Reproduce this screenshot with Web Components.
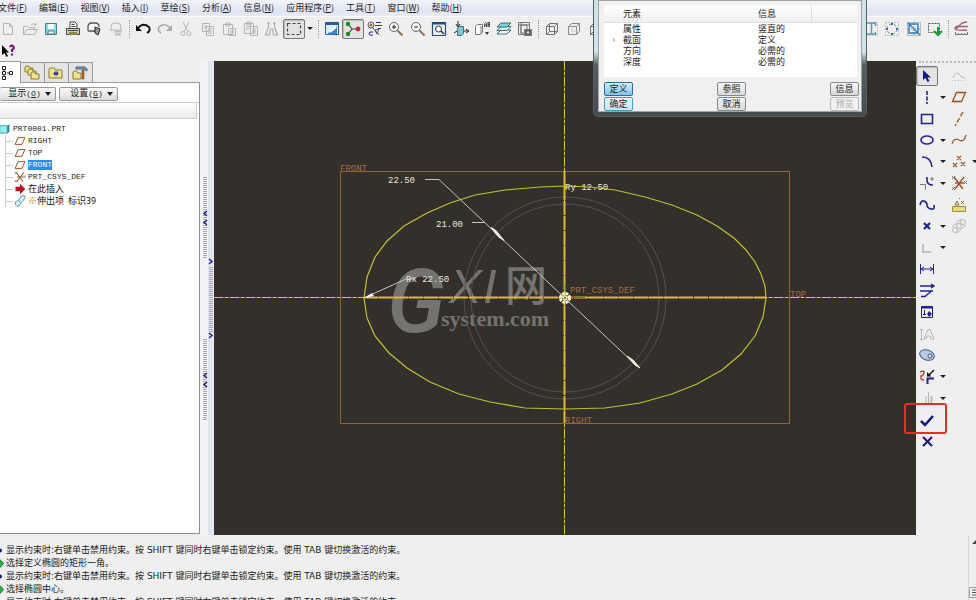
<!DOCTYPE html>
<html lang="zh-CN">
<head>
<meta charset="utf-8">
<title>PRT0001</title>
<style>
  html, body { margin: 0; height: 100%; overflow: hidden; background: #efefef; }
  body { font: 9px/12px "Liberation Sans", "Noto Sans CJK SC", sans-serif; color: #222; }
</style>
</head>
<body>
<cad-app></cad-app>
<script>
const define = (name, html, setup) => customElements.define(name, class extends HTMLElement {
  connectedCallback() {
    if (this.shadowRoot) return;
    const root = this.attachShadow({ mode: 'open' });
    const t = document.createElement('template');
    t.innerHTML = typeof html === 'function' ? html(this) : html;
    root.append(t.content.cloneNode(true));
    if (setup) setup(this, root);
  }
});
const CJK = '"Noto Sans CJK SC", sans-serif';
const folder = (x, y, w, h) => `<path d="M${x} ${y + h}V${y + 1}l1-1h${w / 3}l1 2h${w * 2 / 3 - 2}v${h - 2}z" fill="#efe48c" stroke="#8a7a30"/>`;
const N = 'fill="none" stroke="#23238e" stroke-width="1.6"';
const N2 = 'fill="none" stroke="#23238e"';
const G = 'fill="none" stroke="#b4b4b4"';
const ICONS = {
  new: `<path d="M3.5 2.5h6l3 3v8h-9zM9.500 2.500v3h3" ${G}/>`,
  open: `<path d="M1.500 13.500v-8h4l1 1h6v2M1.500 13.500l3-5h11l-3 5zM9 4q3-3 5 0m0-2v2h-2" ${G}/>`,
  save: `<path d="M2.500 2.500h11v11h-11z" fill="#86dbe2" stroke="#3f7f91"/><path d="M5 3h6v5H5z" fill="#f4ffff"/><path d="M5 10h6v3H5z" fill="#fff" stroke="#3f7f91"/>`,
  print: `<path d="M5 7V1h5l2 2v4" fill="#fff" stroke="#444"/><path d="M1.500 7.500h13v6h-13z" fill="#cfccb6" stroke="#444"/><path d="M4 11h8v3H4z" fill="#8c8a4a"/><path d="M6.500 3.500h3m-3 2h4M3 9.500h10" stroke="#444"/>`,
  plot: `<path d="M2 10V6q0-4 4-4h3q4 0 4 4M2 10h8" fill="#fff" stroke="#555" stroke-width="1.300"/><path d="M9 6l5 2-2 6-3-2z" fill="#999" stroke="#222"/>`,
  send: `<path d="M3 10V6q0-4 4-4h2q4 0 4 4v3H3" ${G}/><path d="M6 10.500h8M7 13.500h6" stroke="#bbb" stroke-width="2"/>`,
  undo: `<path d="M3 7q5-6 11-1 2 4-2 6" fill="none" stroke="#111" stroke-width="1.900"/><path d="M1 4v6h6z" fill="#111"/>`,
  redo: `<path d="M13 7q-5-6-11-1-2 4 2 6" fill="none" stroke="#aaa" stroke-width="1.600"/><path d="M15 4v6H9z" fill="#aaa"/>`,
  cut: `<path d="M5 1l5 10M11 1L6 11" ${G}/><circle cx="5" cy="12.500" r="2" ${G}/><circle cx="11" cy="12.500" r="2" ${G}/>`,
  copy: `<path d="M2.500 2.500h7v8h-7zM6.500 5.500h7v9h-7zM4 5h3M4 7h2m2 1h4m-4 2h4m-4 2h4" ${G}/>`,
  paste: `<path d="M2.500 3.500h9v10h-9zM5 2h4v3H5zM7.500 7.500h7v7h-7zM9 10h4m-4 2h4" ${G}/>`,
  paste2: `<path d="M1.500 2.500h9v10h-9zM4 1h4v3H4zM3 6h5M3 8h3M7.500 5.500h7v9h-7zM9 8h4m-4 2h4m-4 2h4" ${G}/>`,
  find: `<path d="M4.500 2v4l-3 8h4l1-6m4-6v4l3 8h-4l-1-6M6 8h3M3 2h3M9 2h3" fill="none" stroke="#aaa" stroke-width="1.200"/>`,
  select: `<path d="M1.500 2.500h13v11h-13z" fill="none" stroke="#444" stroke-dasharray="3 2" stroke-width="1.200"/>`,
  repaint: `<path d="M1.500 1.500h13v12h-13z" fill="#d9ecf8" stroke="#275b94"/><path d="M1.500 3h13" stroke="#275b94" stroke-width="2"/><path d="M2 14L13 5v8z" fill="#3b87c4"/><path d="M6 11l6-5" stroke="#fff" stroke-width="2"/>`,
  spin: `<path d="M3 3l4 5-4 5M7 8h7" fill="none" stroke="#444" stroke-width="1.200"/><circle cx="3" cy="3" r="2.200" fill="#168c2b"/><circle cx="3" cy="13" r="2.200" fill="#168c2b"/><circle cx="13" cy="8" r="2.400" fill="#cc2430"/>`,
  orient: `<path d="M9 1.500h5M8 4.500h7M11 7.500h3" stroke="#30308e"/><circle cx="4" cy="4" r="3" fill="none" stroke="#555"/><path d="M5 6l7 8M8 9l4-1-2 5z" fill="none" stroke="#555"/><circle cx="4" cy="4" r="1.500" fill="#c05a40"/><path d="M6 11q-4-1-4 2 1 2 4 1" ${N2}/>`,
  zoomin: `<circle cx="6" cy="6" r="4.500" fill="#f7f7f7" stroke="#666"/><path d="M4 6h4M6 4v4" stroke="#222"/><path d="M9.500 9.500l5 5" stroke="#8a7254" stroke-width="2"/>`,
  zoomout: `<circle cx="6" cy="6" r="4.500" fill="#f7f7f7" stroke="#666"/><path d="M4 6h4" stroke="#222"/><path d="M9.500 9.500l5 5" stroke="#8a7254" stroke-width="2"/>`,
  refit: `<path d="M1.500 1.500h13v13h-13z" fill="#e7f2fa" stroke="#2d4c7e" stroke-width="1.200"/><path d="M2 2.500h12" stroke="#2d4c7e" stroke-width="2"/><circle cx="7.500" cy="8" r="3" fill="#fff" stroke="#333"/><path d="M10 10l3 3" stroke="#333" stroke-width="1.600"/>`,
  reorient: `<path d="M4.500 7.500l2-2h4v7l-2 2h-4z" fill="#7fc8d2" stroke="#39707a"/><path d="M5 0v5M3 3l2 3 2-3M11 10h4m-2-2l3 2-3 2M1 12l3-2" fill="none" stroke="#222"/>`,
  views: `<path d="M1.500 5.500l2-2h5v8l-2 2h-5zM7 5v8" fill="#fff" stroke="#777"/><path d="M10.500 6V2.500q1-2 2 0V6m-2-2h2m1.500-3v5m0-4.500h1.500v4H14M14 3.500h2" fill="none" stroke="#444"/><path d="M11 11h4l-2 3z" fill="#333"/>`,
  layers: `<path d="M1 13l4-4h10l-4 4z" fill="#fff" stroke="#39707a"/><path d="M1 9.500l4-4h10l-4 4z" fill="#d3f1f1" stroke="#39707a"/><path d="M1 6l4-4h10l-4 4z" fill="#84d1d4" stroke="#39707a"/>`,
  viewmgr: `<path d="M1.500 1.500h11v12h-11zM4 4h6v8H4zM4 1v13M1 4h12" fill="none" stroke="#777"/><path d="M7 8h8v7H7z" fill="#777"/><circle cx="11" cy="11.500" r="2" fill="#ddd" stroke="#333"/>`,
  cube: `<path d="M2.500 5.500h8v8h-8zM5.500 2.500h8v8h-8zM2.500 5.500l3-3M10.500 5.500l3-3M10.500 13.500l3-3M2.500 13.500l3-3" fill="none" stroke="#777"/>`,
  cube2: `<path d="M2.500 5.500h8v8h-8zM5.500 2.500h8v8M2.500 5.500l3-3M10.500 5.500l3-3M10.500 13.500l3-3" fill="none" stroke="#888"/><path d="M5.500 3v7h7" fill="none" stroke="#ccc"/>`,
  dims: `<path d="M4 2h9M4 13h9M8.500 2v11M12.500 2v3m0 6v3" fill="none" stroke="#5799aa" stroke-width="1.500"/><path d="M1.500 1.500h13v13h-13z" fill="none" stroke="#999" stroke-dasharray="1 2"/>`,
  constr: `<path d="M1.500 1.500h13v13h-13z" fill="none" stroke="#888" stroke-dasharray="1 2"/><circle cx="8" cy="8" r="5" fill="none" stroke="#777" stroke-dasharray="3 2"/><path d="M2 8h2M12 8h2M8 2v2M8 12v2" stroke="#2f6aa0" stroke-width="2"/>`,
  grid: `<path d="M1.500 1.500h13v13h-13zM8 1v14M1 8h14" fill="none" stroke="#888" stroke-dasharray="1 1"/><path d="M3 3h9v9H3zM2 2l12 12" fill="none" stroke="#277fc0" stroke-width="1.400"/>`,
  verts: `<path d="M1.500 2.500h11v9h-11z" fill="none" stroke="#555" stroke-dasharray="2 1"/><path d="M7 10l4 4 4-4M11 6v7" fill="none" stroke="#22993a" stroke-width="2"/>`,
  sketcher: `<path d="M14 1Q9 1 6 5q-5 1-4 3 1 2 12 1M6 5.500h9M6 5l-3 3" fill="none" stroke="#a55b80" stroke-width="1.300"/><path d="M2 13.500h12M2.500 11v3m3-2v2m3-2v2m3-2v2m3-3v3" stroke="#777"/>`,
  help: `<path d="M2 2v10l2.500-2 2 4 1.500-1-2-3.500h3z" fill="#000"/><path d="M10 4q1-2 3-1 2 2-1 4v2m0 1.500v2" fill="none" stroke="#7a1280" stroke-width="2.200"/>`,
  treeview: `<path d="M3.500 1.500h3v3h-3zM3.500 6.500h3v3h-3zM3.500 11.500h3v3h-3zM10.500 6.500h3v3h-3zM8 8h2M5 5v1M5 10v1" fill="none" stroke="#222"/>`,
  folders: folder(1, 1, 8, 6) + folder(4, 4, 8, 6) + folder(7, 7, 8, 7),
  favs: folder(1, 3, 13, 10) + `<path d="M8 6v5M5.500 8.500h5M6 7l4 3m0-3l-4 3" stroke="#26269a"/>`,
  toolsf: folder(1, 6, 8, 8) + `<path d="M4 2h9l2 2v2l-3-2H4z" fill="#8fa5bc" stroke="#4a6078"/><path d="M10 5h2v9h-2z" fill="#c56d30" stroke="#71401f" stroke-width=".6"/>`,
  part: `<path d="M1 3.500h10v10H1z" fill="#8feef0" stroke="#398f96"/><path d="M11 3.500l3-2v10l-3 2z" fill="#2f8b92"/>`,
  plane: `<path d="M5.500 3.500h9l-4 9h-9z" fill="none" stroke="#96501f" stroke-width="1.300"/>`,
  csys: `<path d="M3 2l9 12M13 2L4 14M8 8H4M8 8h5" fill="none" stroke="#a0522d" stroke-width="1.400"/><path d="M1 1l3 3m0-3L1 4M13 6l3 3m0-3l-3 3M1 12l3 3m0-3l-3 3" stroke="#777"/>`,
  insert: `<path d="M2 5h6V1l7 7-7 7v-4H2z" fill="#b90f22"/>`,
  extrude: `<path d="M2 9l4-2 3 3-1 4-4 1-2-2zM6 7l4-6h4l1 3-6 7" fill="#d1f0f2" stroke="#42848c"/>`,
  arrow: `<path d="M4 2v10l2.500-2 2 4 2-1-2-3.500h3.500z" fill="#111a8c"/>`,
  line: `<path d="M8 2v13" ${N} stroke-dasharray="4 1.500"/>`,
  rect: `<path d="M2.500 3.500h11v9h-11z" ${N}/>`,
  ellipse: `<ellipse cx="8" cy="8" rx="6" ry="4" ${N}/>`,
  arc: `<path d="M3 3q9 0 10 10" ${N}/>`,
  fillet: `<path d="M8 2v3q0 5 6 5" ${N}/><path d="M1 9.500h5.500v5M13 2v4m-2-2h4" fill="none" stroke="#777"/>`,
  spline: `<path d="M1 8q1-5 4-4t3 4 4 4 3-4" ${N}/>`,
  point: `<path d="M5 5l6 6m0-6l-6 6" fill="none" stroke="#23238e" stroke-width="2.200"/>`,
  corner: `<path d="M4 4v8h8" fill="none" stroke="#b4b4b4" stroke-width="1.500"/>`,
  dim: `<path d="M1.500 3v10M14.500 3v10M2 8h12M5 6L2 8l3 2m6-4l3 2-3 2" ${N2}/>`,
  modify: `<path d="M1 3h13M12 1l3 2-3 2M1 8h13M2 13.500h4l7-6" fill="none" stroke="#23238e" stroke-width="1.400"/>`,
  constraint: `<path d="M2.500 2.500h11v11h-11z" ${N2}/><path d="M2 3.500h12" stroke="#23238e" stroke-width="2"/><path d="M5.500 6v4M4 10.500h3" ${N2}/><path d="M10 7l3 3-3 3-2-3z" fill="#23238e"/>`,
  text: `<path d="M2.500 3v10M1 3.500h3M1 13.500h3M5 13l4-9.500h2l4 9.500h-3l-1-3H8l-1 3z" ${G}/>`,
  palette: `<ellipse cx="8" cy="8" rx="7.500" ry="5" transform="rotate(20 8 8)" fill="#b9cbe4" stroke="#3a5588"/><circle cx="11" cy="9" r="2" fill="#dfe9f5" stroke="#3a5588"/>`,
  trim: `<path d="M1 3q5-2 4 1t-3 3q-1 4 3 4" fill="none" stroke="#b0482e" stroke-width="1.300"/><path d="M8.500 15V9.500H15" fill="none" stroke="#23238e" stroke-width="2"/><path d="M15 1l-5 5" stroke="#111" stroke-width="1.500"/><path d="M8 3v4.500h4.500z" fill="#111"/>`,
  mirror: `<path d="M9.500 2v12M7 6v7H5M12 6q3 3 0 7z" ${G}/>`,
  done: `<path d="M2 9l4 4L14 4" fill="none" stroke="#15157e" stroke-width="2.500"/>`,
  quit: `<path d="M4 4l9 9m0-9l-9 9" fill="none" stroke="#15157e" stroke-width="2"/>`,
  sketchg: `<path d="M2 10q3-7 6-4 2 4 6 4" ${G}/><path d="M1 12.500h14" fill="none" stroke="#bbb" stroke-dasharray="1 2"/>`,
  axis: `<path d="M12 1L4 15" fill="none" stroke="#a06038" stroke-width="1.500" stroke-dasharray="5 2"/>`,
  curve: `<path d="M1 12q2-7 7-4t7-5" fill="none" stroke="#a06038" stroke-width="1.400"/>`,
  points: `<path d="M6 2l4 4m0-4L6 6M2 9l4 4m0-4l-4 4M10 8l4 4m0-4l-4 4" stroke="#a06038" stroke-width="1.400"/>`,
  ref: `<path d="M1.500 9.500h13v5h-13z" fill="#e8db75" stroke="#9c8c3c"/><path d="M4 8l2-4 2 4zM8 2l1-1M10 4l3 3m0-3l-3 3" fill="none" stroke="#8c6a38"/>`,
  chain: `<circle cx="4" cy="12" r="2.500" ${G}/><circle cx="8" cy="8" r="2.500" ${G}/><circle cx="12" cy="4" r="2.500" ${G}/><path d="M1 9l9-8M6 15l9-8" ${G}/>`
};
define('cad-icon', el => `<style>:host{display:block;width:16px;height:16px;flex:none}svg{display:block}</style><svg width="16" height="16" viewBox="0 0 16 16" aria-hidden="true">${ICONS[el.getAttribute('name')]}</svg>`);

define('drop-arrow', `<style>:host{display:block;width:6px;flex:none}button{all:unset;display:block;width:0;border:3px solid transparent;border-top-color:#222;border-bottom:0}</style><button aria-label="更多"></button>`);

define('tool-button', el => `<style>
  :host{display:block;flex:none;width:16px}
  button{appearance:none;border:1px solid transparent;background:none;padding:1px 2px;margin:0 -3px;border-radius:2px;display:block}
  :host([pressed]) button{border-color:#777;background:#e3e3e3;box-shadow:inset 1px 1px 1px #bbb}
  </style><button aria-label="${el.getAttribute('icon')}"><cad-icon name="${el.getAttribute('icon')}"></cad-icon></button>`);

define('menu-bar', () => {
  const items = [['文件', 'F'], ['编辑', 'E'], ['视图', 'V'], ['插入', 'I'], ['草绘', 'S'], ['分析', 'A'], ['信息', 'N'], ['应用程序', 'P'], ['工具', 'T'], ['窗口', 'W'], ['帮助', 'H']];
  return `<style>
  :host{display:block;background:linear-gradient(#f3f5fb,#dfe4f4 70%,#e8ebf5);border-bottom:1px solid #fafafa}
  nav{display:flex;gap:12px;height:16px;align-items:center;margin-left:-2px}
  button{all:unset;font:9px/14px "Noto Sans CJK SC",sans-serif;color:#1c1c1c}
  </style><nav>${items.map(([t, k]) => `<button>${t}(<u>${k}</u>)</button>`).join('')}</nav>`;
});

define('tool-bar', () => {
  const group = (w, names) => `<div class="g" style="width:${w}px">${names.split(' ').map(n => `<tool-button icon="${n.replace('*', '')}"${n.includes('*') ? ' pressed' : ''}></tool-button>`).join('')}</div>`;
  return `<style>
  :host{display:block}
  .bar{display:flex;height:23px;align-items:center}
  .g{display:flex;justify-content:space-between;flex:none}
  i{flex:none;width:0;height:18px;border-left:1px dotted #999}
  .sp{flex:1}
  .second{height:21px;display:flex;align-items:center}
  </style>
  <div class="bar">${group(124, 'new open save print plot send')}<i style="margin:0 5px"></i>${group(167, 'undo redo cut copy paste paste2 find select*')}<drop-arrow style="margin:0 5px"></drop-arrow><i style="margin-right:5px"></i>${group(209, 'repaint spin* orient zoomin zoomout refit reorient views layers viewmgr')}<i style="margin:0 5px"></i>${group(60, 'cube cube2 cube')}<span class="sp"></span>${group(80, 'dims constr grid verts')}<i style="margin:0 4px 0 5px"></i>${group(16, 'sketcher')}<span style="width:7px"></span></div>
  <div class="second"><tool-button icon="help"></tool-button></div>`;
});

define('tree-item', el => `<style>
  :host{display:flex;align-items:center;height:12px;gap:2px;padding-left:14px;font:8px/10px "Liberation Mono",${CJK};color:#222;background:linear-gradient(#ccc,#ccc) 5px 0/1px 100% no-repeat,linear-gradient(#ccc,#ccc) 5px 6px/8px 1px no-repeat}
  :host([root]){padding-left:0;margin-left:-1px;background:none}
  :host([cjk]){font:9px/12px ${CJK};color:#111}
  :host([selected]) span{background:#2f8ae8;color:#fff}
  cad-icon{transform:scale(.75);width:12px;height:12px;transform-origin:0 0}
  span{white-space:pre}
  </style><cad-icon name="${el.getAttribute('icon')}"></cad-icon><span><slot></slot></span>`);

define('side-panel', `<style>
  :host{display:flex;flex-direction:column;width:200px;flex:none;padding-bottom:1px}
  .tabs{display:flex;height:22px;align-items:flex-end;padding-top:1px;box-sizing:border-box}
  .tabs button{appearance:none;box-sizing:border-box;width:24px;height:21px;padding:2px 3px;border:1px solid #999;border-left:0;border-bottom:0;background:#e4e4e4}
  .tabs button:first-child{width:21px;background:#fff;padding-left:0;height:22px;position:relative}
  .tabs button:first-child cad-icon{margin-left:-1px}
  .body{flex:1;background:#fff;border:1px solid #8e8e96;border-left:0;border-top:0;box-shadow:0 -1px #999;display:flex;flex-direction:column}
  .cmds{display:flex;gap:3px;padding:4px 0 1px;border-bottom:1px solid #ccc}
  .cmds button{appearance:none;display:flex;align-items:center;justify-content:center;gap:4px;width:59px;height:14px;padding:0;border:1px solid #999;border-radius:2px;background:linear-gradient(#f8f8f8,#dcdcdc);font:9px/12px "Liberation Mono",${CJK};color:#222}
  .cmds button:first-child{width:56px;border-left:0;padding-left:4px}
  .cmds button:last-child{padding-left:6px}
  .cmds small{font-size:8px}
  .cmds b{border:3px solid transparent;border-top:4px solid #222;border-bottom:0}
  .strip{height:15px;margin:0 2px 0 0;border:1px solid #ccc;border-left:0;border-top:0;background:linear-gradient(#fff,#eaeaea)}
  .tree{padding-top:4px}
  em{font-style:normal;color:#9a8b00}
  </style>
  <div class="tabs" role="tablist"><button role="tab" aria-label="模型树"><cad-icon name="treeview"></cad-icon></button><button role="tab" aria-label="文件夹"><cad-icon name="folders"></cad-icon></button><button role="tab" aria-label="收藏夹"><cad-icon name="favs"></cad-icon></button><button role="tab" aria-label="工具"><cad-icon name="toolsf"></cad-icon></button></div>
  <div class="body">
    <div class="cmds"><button><span>显示<small>(<u>O</u>)</small></span><b></b></button><button><span>设置<small>(<u>G</u>)</small></span><b></b></button></div>
    <div class="strip"></div>
    <div class="tree">
      <tree-item root icon="part">PRT0001.PRT</tree-item>
      <tree-item icon="plane">RIGHT</tree-item>
      <tree-item icon="plane">TOP</tree-item>
      <tree-item icon="plane" selected>FRONT</tree-item>
      <tree-item icon="csys">PRT_CSYS_DEF</tree-item>
      <tree-item cjk icon="insert">在此插入</tree-item>
      <tree-item cjk icon="extrude"><em>※</em>伸出项  标识39</tree-item>
    </div>
  </div>`);

define('pane-splitter', `<style>:host{display:block;width:14px;flex:none;background:linear-gradient(90deg,#f3f3f7 55%,#dfe3ef 60%,#e6e9f4)}svg{display:block}</style>
  <svg width="14" height="474" viewBox="200 61 14 474" fill="none">
    <g stroke="#a9a9b2" stroke-width="4" stroke-dasharray="1 1"><path d="M205 177v81M205 339v81M211 267v66"/></g>
    <path d="M207 211l-3 2.500 3 2.500m0 4l-3 2.500 3 2.500M209 259l3 2.500-3 2.500m0 69l3 2.500-3 2.500M207 373l-3 2.500 3 2.500m0 4l-3 2.500 3 2.500" stroke="#24248f" stroke-width="1.500"/>
  </svg>`);

define('sketch-canvas', `<style>
  :host{display:block;flex:1;min-width:0;background:#33302c;overflow:hidden}
  svg{display:block;width:100%;height:100%}
  .t{font:9px "Liberation Mono",monospace}
  </style>
  <svg viewBox="214 61 702 474" preserveAspectRatio="xMidYMid slice" fill="none">
    <g fill="#747370">
      <text x="387" y="332" font-family="Roboto" font-style="italic" font-weight="500" font-size="88">G</text>
      <text x="449" y="303" font-family="Liberation Sans" font-style="italic" font-size="49">X</text>
      <text x="483" y="303" font-family="Liberation Sans" font-style="italic" font-size="49">I</text>
      <text x="505" y="301" font-family="Noto Sans CJK SC" font-weight="500" font-size="42">网</text>
      <text x="441" y="326" font-family="Liberation Serif" font-weight="700" font-size="22">system.com</text>
    </g>
    <g stroke="#55524e"><circle cx="565" cy="298" r="101"/><circle cx="565" cy="298" r="94"/></g>
    <path d="M340.500 171.500h449v252h-449z" stroke="#8f6630"/>
    <path d="M766 298 765 286 761 274 755 262 746 250 734 238 717 226 697 215 672 205 645 197 615 190 590 187 565 186 540 187 505 190 475 195 450 203 427 213 404 226 387 241 375 257 367 277 364 298 367 318 375 336 389 353 407 368 430 382 459 394 490 402 525 408 565 409 605 408 640 403 672 394 697 384 722 370 741 354 755 336 763 317z" stroke="#c0c034" stroke-width="1.200"/>
    <path d="M214 297.500h702" stroke="#7d621c"/>
    <path d="M564.500 61v474" stroke="#7d621c"/>
    <path d="M214 297.500h702" stroke="#e3c62c" stroke-dasharray="9 2 3 2"/>
    <path d="M564.500 61v474" stroke="#e3c62c" stroke-dasharray="9 2 3 2"/>
    <path d="M364 297.500h402M564.500 171v252" stroke="#deba34" stroke-width="2" stroke-dasharray="14 1"/>
    <g stroke="#c5c4bd"><path d="M425 179.500h14L638 367M472 222.500h13M366 297l40-18h9"/></g>
    <path d="M491 227.500l5 3 8 10-6-4zM640 368l-5-3-8-9 6 4z" fill="#f1f1e2" stroke="#f1f1e2"/><path d="M364 298l8-5 2 3z" fill="#fff"/>
    <circle cx="565" cy="298" r="4.500" stroke="#fffbd0" stroke-width="3" stroke-dasharray="2.600 .94"/><path d="M565 283v8" stroke="#349b3b"/><path d="M571 297.500h14" stroke="#c84a30"/><circle cx="565" cy="298" r="2" fill="#6c9951" stroke="#fff"/>
    <g class="t" fill="#a56b45"><text x="340" y="171">FRONT</text><text x="565" y="423">RIGHT</text><text x="790" y="297">TOP</text><text x="570" y="293">PRT_CSYS_DEF</text></g>
    <g class="t" fill="#e6e5dc"><text x="388" y="183">22.50</text><text x="436" y="227">21.00</text><text x="406" y="282">Rx 22.50</text><text x="565" y="190">Ry 12.50</text></g>
  </svg>`);

define('sketch-palette', () => {
  const rows = [['arrow*', 0, 'sketchg'], ['line', 1, 'plane'], ['rect', 0, 'axis'], ['ellipse', 1, 'curve'], ['arc', 1, 'points', 1], ['fillet', 1, 'csys'], ['spline', 0, 'ref'], ['point', 1, 'chain'], ['corner', 1], ['dim'], ['modify'], ['constraint'], ['text'], ['palette'], ['trim', 1], ['mirror', 1], ['done!'], ['quit']];
  return `<style>
  :host{display:block;width:60px;flex:none;position:relative;overflow:visible}
  .top{border-top:2px dotted #bbb;margin:0 0 2px 3px}
  .list{display:grid;grid-template-rows:repeat(18,minmax(0,1fr));height:387px}
  .r{display:grid;grid-template-columns:16px 6px 16px 6px;column-gap:5px;padding-left:3px;align-items:center;overflow:visible}
  .hot{position:relative}
  .hot::after{content:"";position:absolute;left:-15px;top:-7px;width:39px;height:27px;border:2px solid #e0302a;border-radius:3px;pointer-events:none}
  </style><div class="top"></div><div class="list">${rows.map(([a, d, b, e]) => `<div class="r"><span class="${a.includes('!') ? 'hot' : ''}"><tool-button icon="${a.replace(/[*!]/, '')}"${a.includes('*') ? ' pressed' : ''}></tool-button></span>${d ? '<drop-arrow></drop-arrow>' : '<span></span>'}${b ? `<tool-button icon="${b}"></tool-button>` : ''}${e ? '<drop-arrow></drop-arrow>' : ''}</div>`).join('')}</div>`;
});

define('message-log', () => {
  const a = '显示约束时:右键单击禁用约束。按 SHIFT 键同时右键单击锁定约束。使用 TAB 键切换激活的约束。';
  return `<style>
  :host{display:flex;height:65px;flex:none;overflow:hidden;justify-content:space-between;font:9px/13px "DejaVu Sans",${CJK};color:#222}
  ul{list-style:none;margin:0;padding:9px 0 0}
  li{height:13px;display:flex;align-items:center;gap:2px;white-space:nowrap}
  svg{display:block;flex:none}
  .sc{width:7px;border-left:1px solid #d5d5d5;margin-top:1px}
  </style><ul>${[a, '选择定义椭圆的矩形一角。', a, '选择椭圆中心。', a].map((t, i) => `<li><svg width="4" height="9" viewBox="0 0 4 9">${i % 2 ? '<path d="M-3 1l3-.5 3.500 4L0 8.500z" fill="#2fae4d" stroke="#13722c"/>' : '<circle cx="0" cy="4.500" r="2" fill="#1a1a8c"/>'}</svg><span>${t}</span></li>`).join('')}</ul>
  <div class="sc"><svg width="7" height="64" viewBox="0 0 7 64"><path d="M3 8l4-4v4z" fill="#444"/><path d="M.5 51.500H8v10H.5z" fill="#f7f7f7" stroke="#999"/><path d="M3 54h4M3 56.500h4M3 59h4" stroke="#555"/></svg></div>`;
});

define('dialog-button', `<style>
  :host{display:block}
  button{appearance:none;display:block;box-sizing:border-box;width:29px;height:14px;padding:0;border:1px solid #888;border-radius:2px;background:linear-gradient(#f7f7f7,#d9d9d9);font:9px/12px ${CJK};color:#222}
  :host([primary]) button{border-color:#2c6f9c;background:linear-gradient(#d5effb,#7cc2e8)}
  :host([def]) button{border-color:#3aa0c8;background:linear-gradient(#eef8fc,#c9e2ee)}
  :host([off]) button{color:#aaa;border-color:#bbb;background:#f2f2f2}
  </style><button><slot></slot></button>`);

define('element-dialog', `<style>
  :host{display:block;position:absolute;left:593px;top:-4px;width:274px;box-sizing:border-box;padding:3px 4px 4px;border:1px solid #555c62;border-radius:0 0 5px 5px;background:linear-gradient(#cfe3e9 0 55px,#585d60 68px,#454b4e);z-index:5}
  .in{background:#f0f0f0;border:1px solid #9aa5aa;padding:4px 2px 0 5px}
  .list{background:#fff;height:72px;width:253px}
  table{border-collapse:collapse;width:100%;table-layout:fixed;font:9px/11px ${CJK};color:#1c1c1c}
  th,td{padding:0;font-weight:400;text-align:left;height:11px}
  th{height:17px;background:linear-gradient(#fff,#efefef);border-bottom:1px solid #ddd}
  th:last-child{border-left:1px solid #ddd}
  .a{width:19px;text-align:center;color:#666}
  .b{width:135px}.c{width:53px}
  .btns{display:grid;grid-template-columns:repeat(3,29px);justify-content:space-between;row-gap:1px;margin-top:5px}
  </style><div class="in"><div class="list"><table>
  <thead><tr><th class="a"></th><th class="b">元素</th><th class="c">信息</th><th></th></tr></thead>
  <tbody><tr><td></td><td>属性</td><td>竖直的</td></tr><tr><td class="a">›</td><td>截面</td><td>定义</td></tr><tr><td></td><td>方向</td><td>必需的</td></tr><tr><td></td><td>深度</td><td>必需的</td></tr></tbody></table></div>
  <div class="btns"><dialog-button primary>定义</dialog-button><dialog-button>参照</dialog-button><dialog-button>信息</dialog-button><dialog-button def>确定</dialog-button><dialog-button>取消</dialog-button><dialog-button off>预览</dialog-button></div></div>`);

define('cad-app', `<style>
  :host{display:flex;flex-direction:column;height:100vh;position:relative;overflow:hidden}
  main{display:flex;flex:1;min-height:0}
  </style>
  <menu-bar></menu-bar><tool-bar></tool-bar>
  <main><side-panel></side-panel><pane-splitter></pane-splitter><sketch-canvas></sketch-canvas><sketch-palette></sketch-palette></main>
  <message-log></message-log>
  <element-dialog></element-dialog>`);
</script>
</body>
</html>
